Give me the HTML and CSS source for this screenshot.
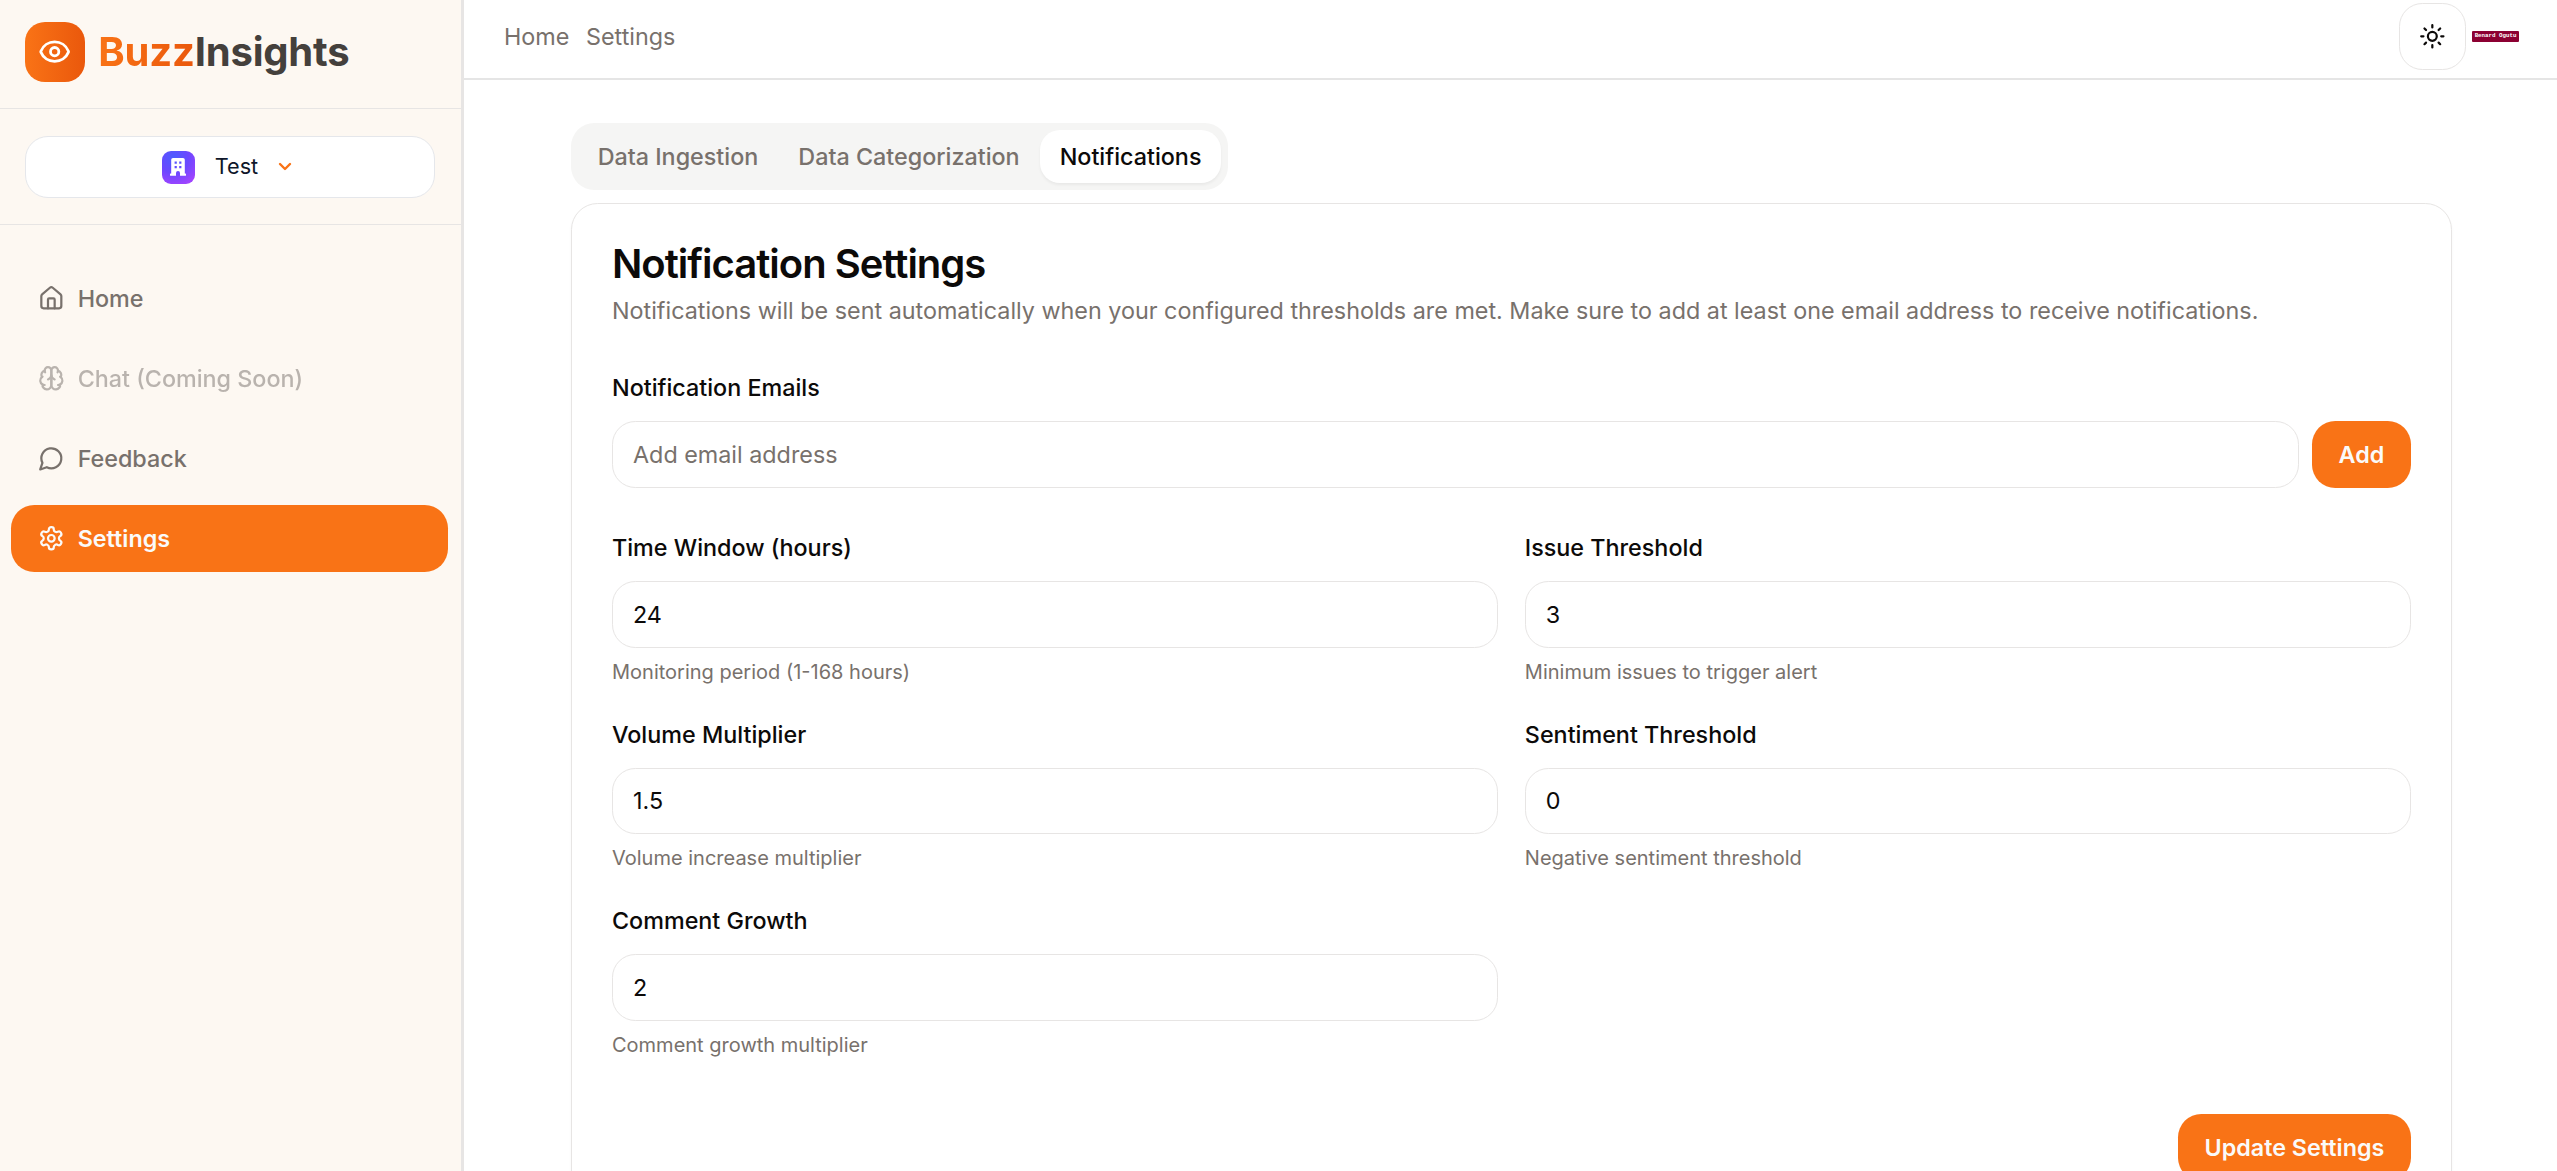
FILE: index.html
```html
<!DOCTYPE html>
<html lang="en">
<head>
<meta charset="utf-8">
<title>BuzzInsights – Settings</title>
<link rel="stylesheet" href="styles.css">
</head>
<body>
<div class="app">
  <aside class="sidebar">
    <div class="brand">
      <span class="brand-mark">
        <svg class="icon icon-eye" viewBox="0 0 24 24"><path d="M2.062 12.348a1 1 0 0 1 0-.696 10.75 10.75 0 0 1 19.876 0 1 1 0 0 1 0 .696 10.75 10.75 0 0 1-19.876 0"/><circle cx="12" cy="12" r="3"/></svg>
      </span>
      <span class="brand-name"><span class="brand-accent">Buzz</span>Insights</span>
    </div>
    <div class="org">
      <button class="org-switcher">
        <span class="org-avatar">
          <svg class="org-glyph" viewBox="0 0 16 18"><path fill-rule="evenodd" d="M3 0h10a1.8 1.8 0 0 1 1.8 1.8V15.6h.4a1 1 0 0 1 0 2.2H10V15a2 2 0 0 0-4 0v2.8H.8a1 1 0 0 1 0-2.2h.4V1.8A1.8 1.8 0 0 1 3 0zM4.6 3.6v2.2h2.2V3.6zM9.2 3.6v2.2h2.2V3.6zM4.6 8v2.2h2.2V8zM9.2 8v2.2h2.2V8z"/></svg>
        </span>
        <span class="org-name">Test</span>
        <svg class="org-chevron" viewBox="0 0 14 10"><path d="M2 2l5 5 5-5"/></svg>
      </button>
    </div>
    <nav class="nav">
      <a class="nav-item"><svg class="icon" viewBox="0 0 24 24"><path d="M15 21v-8a1 1 0 0 0-1-1h-4a1 1 0 0 0-1 1v8"/><path d="M3 10a2 2 0 0 1 .709-1.528l7-5.999a2 2 0 0 1 2.582 0l7 5.999A2 2 0 0 1 21 10v9a2 2 0 0 1-2 2H5a2 2 0 0 1-2-2z"/></svg>Home</a>
      <a class="nav-item nav-item-disabled"><svg class="icon" viewBox="0 0 24 24"><path d="M12 5a3 3 0 1 0-5.997.125 4 4 0 0 0-2.526 5.77 4 4 0 0 0 .556 6.588A4 4 0 1 0 12 18Z"/><path d="M12 5a3 3 0 1 1 5.997.125 4 4 0 0 1 2.526 5.77 4 4 0 0 1-.556 6.588A4 4 0 1 1 12 18Z"/><path d="M15 13a4.5 4.5 0 0 1-3-4 4.5 4.5 0 0 1-3 4"/><path d="M17.599 6.5a3 3 0 0 0 .399-1.375"/><path d="M6.003 5.125A3 3 0 0 0 6.401 6.5"/><path d="M3.477 10.896a4 4 0 0 1 .585-.396"/><path d="M19.938 10.5a4 4 0 0 1 .585.396"/><path d="M6 18a4 4 0 0 1-1.967-.516"/><path d="M19.967 17.484A4 4 0 0 1 18 18"/></svg>Chat (Coming Soon)</a>
      <a class="nav-item"><svg class="icon" viewBox="0 0 24 24"><path d="M7.9 20A9 9 0 1 0 4 16.1L2 22Z"/></svg>Feedback</a>
      <a class="nav-item nav-item-active"><svg class="icon" viewBox="0 0 24 24"><path d="M12.22 2h-.44a2 2 0 0 0-2 2v.18a2 2 0 0 1-1 1.73l-.43.25a2 2 0 0 1-2 0l-.15-.08a2 2 0 0 0-2.73.73l-.22.38a2 2 0 0 0 .73 2.73l.15.1a2 2 0 0 1 1 1.72v.51a2 2 0 0 1-1 1.74l-.15.09a2 2 0 0 0-.73 2.73l.22.38a2 2 0 0 0 2.73.73l.15-.08a2 2 0 0 1 2 0l.43.25a2 2 0 0 1 1 1.73V20a2 2 0 0 0 2 2h.44a2 2 0 0 0 2-2v-.18a2 2 0 0 1 1-1.73l.43-.25a2 2 0 0 1 2 0l.15.08a2 2 0 0 0 2.73-.73l.22-.39a2 2 0 0 0-.73-2.73l-.15-.08a2 2 0 0 1-1-1.74v-.5a2 2 0 0 1 1-1.74l.15-.09a2 2 0 0 0 .73-2.73l-.22-.38a2 2 0 0 0-2.73-.73l-.15.08a2 2 0 0 1-2 0l-.43-.25a2 2 0 0 1-1-1.73V4a2 2 0 0 0-2-2z"/><circle cx="12" cy="12" r="3"/></svg>Settings</a>
    </nav>
  </aside>
  <div class="main">
    <header class="topbar">
      <nav class="crumbs"><a>Home</a><a>Settings</a></nav>
      <div class="topbar-actions">
        <button class="theme-toggle"><svg class="icon icon-sun" viewBox="0 0 24 24"><circle cx="12" cy="12" r="4"/><path d="M12 2v2M12 20v2M4.93 4.93l1.41 1.41M17.66 17.66l1.41 1.41M2 12h2M20 12h2M6.34 17.66l-1.41 1.41M19.07 4.93l-1.41 1.41"/></svg></button>
        <span class="user-tag">Benard Ogutu</span>
      </div>
    </header>
    <main class="content">
      <div class="tabs">
        <button class="tab">Data Ingestion</button>
        <button class="tab">Data Categorization</button>
        <button class="tab tab-active">Notifications</button>
      </div>
      <section class="card">
        <h1 class="card-title">Notification Settings</h1>
        <p class="card-text">Notifications will be sent automatically when your configured thresholds are met. Make sure to add at least one email address to receive notifications.</p>
        <div class="field field-emails">
          <label class="label">Notification Emails</label>
          <div class="email-row">
            <input class="input" placeholder="Add email address">
            <button class="button">Add</button>
          </div>
        </div>
        <div class="grid">
          <div class="field"><label class="label">Time Window (hours)</label><input class="input" value="24"><p class="hint">Monitoring period (1-168 hours)</p></div>
          <div class="field"><label class="label">Issue Threshold</label><input class="input" value="3"><p class="hint">Minimum issues to trigger alert</p></div>
          <div class="field"><label class="label">Volume Multiplier</label><input class="input" value="1.5"><p class="hint">Volume increase multiplier</p></div>
          <div class="field"><label class="label">Sentiment Threshold</label><input class="input" value="0"><p class="hint">Negative sentiment threshold</p></div>
          <div class="field"><label class="label">Comment Growth</label><input class="input" value="2"><p class="hint">Comment growth multiplier</p></div>
        </div>
        <div class="card-footer"><button class="button">Update Settings</button></div>
      </section>
    </main>
  </div>
</div>
</body>
</html>
```
FILE: styles.css
```css
* { box-sizing: border-box; margin: 0; }
body {
  font-family: Inter, "Liberation Sans", sans-serif;
  font-size: 23.33px;
  line-height: 33.33px;
  color: #0c0a09;
  background: #fff;
  overflow: hidden;
}
button, input { font: inherit; color: inherit; border: 0; background: none; padding: 0; }
.app { display: flex; height: 1171px; }
.icon { width: 26.67px; height: 26.67px; fill: none; stroke: currentColor; stroke-width: 2; stroke-linecap: round; stroke-linejoin: round; flex: none; }

/* Sidebar */
.sidebar { width: 464px; flex: none; background: #fdf8f2; border-right: 3px solid #e7e5e4; }
.brand { display: flex; align-items: center; gap: 13.33px; height: 109px; padding: 0 25px 5px; border-bottom: 1px solid #e7e5e4; }
.brand-mark { display: grid; place-items: center; width: 60px; height: 60px; border-radius: 20px; background: linear-gradient(to right, #f97316, #ea580c); color: #fff; padding-right: 1px; }
.icon-eye { width: 33.33px; height: 33.33px; }
.brand-name { font-size: 40px; font-weight: 700; line-height: 53px; letter-spacing: -0.2px; color: #44403c; }
.brand-accent { background: linear-gradient(to right, #f97316, #ea580c); -webkit-background-clip: text; background-clip: text; color: transparent; }
.org { padding: 27px 26px 26px 25px; border-bottom: 1px solid #e7e5e4; }
.org-switcher { display: flex; align-items: center; justify-content: center; width: 410px; height: 62px; border: 1px solid #e5e7eb; border-radius: 23px; background: #fff; color: #0f172a; padding-right: 6px; font-size: 21.67px; }
.org-avatar { display: grid; place-items: center; width: 33px; height: 33px; border-radius: 9px; background: radial-gradient(circle at 35% 20%, #4b5cff 0%, #6c47ff 45%, #a044ff 85%); }
.org-glyph { width: 16px; height: 18px; fill: #fff; }
.org-name { margin-left: 20px; }
.org-chevron { width: 14px; height: 10px; margin-left: 20px; fill: none; stroke: #f97316; stroke-width: 2.4; stroke-linecap: round; stroke-linejoin: round; }
.nav { display: flex; flex-direction: column; gap: 13.33px; padding: 40px 13px 0 11px; }
.nav-item { display: flex; align-items: center; gap: 13.33px; height: 66.67px; padding: 0 26.67px; border-radius: 23.33px; font-weight: 500; color: #78716c; }
.nav-item-disabled { opacity: .5; }
.nav-item-active { background: #f97316; color: #fafaf9; font-weight: 600; }

/* Top bar */
.main { flex: 1; min-width: 0; }
.topbar { display: flex; justify-content: space-between; height: 80px; padding: 3px 38px 8px 40px; border-bottom: 2px solid #e5e5e5; }
.crumbs { display: flex; align-items: center; gap: 16.67px; height: 67px; color: #78716c; }
.topbar-actions { display: flex; align-items: center; gap: 6px; height: 67px; }
.theme-toggle { display: grid; place-items: center; width: 67px; height: 67px; border: 1px solid #e7e5e4; border-radius: 23.33px; }
.user-tag { width: 47px; height: 11px; border-radius: 1px; background: #8c0032; color: #fff; font: 700 5.8px/10px "Liberation Mono", monospace; text-align: center; white-space: nowrap; }

/* Content */
.content { width: 1881px; margin: 43px 0 0 107px; }
.tabs { display: inline-flex; align-items: center; height: 67px; padding: 0 6.67px; border-radius: 23.33px; background: #f5f5f4; vertical-align: top; }
.tab { height: 53.33px; padding: 0 20px; border-radius: 20px; font-weight: 500; color: #78716c; }
.tab-active { background: #fff; color: #0c0a09; box-shadow: 0 2px 3px rgba(0, 0, 0, .05); }
.card { margin-top: 13px; height: 1100px; padding: 40px; border: 1px solid #e7e5e4; border-radius: 26.67px; box-shadow: 0 2px 3px rgba(0, 0, 0, .04); }
.card-title { font-size: 40px; line-height: 40px; font-weight: 600; letter-spacing: -1px; }
.card-text { margin-top: 10px; color: #78716c; }
.field-emails { margin-top: 44px; }
.label { display: block; height: 50px; line-height: 34px; font-weight: 500; }
.email-row { display: flex; gap: 13.33px; }
.input { display: block; width: 100%; height: 66.67px; padding: 0 20px; border: 1px solid #e7e5e4; border-radius: 23.33px; background: #fff; }
.input::placeholder { color: #78716c; opacity: 1; }
.button { flex: none; height: 66.67px; padding: 0 26.67px; border-radius: 23.33px; background: #f97316; color: #fafaf9; font-weight: 600; }
.grid { display: grid; grid-template-columns: 1fr 1fr; column-gap: 26.67px; row-gap: 26.67px; margin-top: 43px; }
.field { min-width: 0; }
.grid .field { height: 160px; }
.hint { margin-top: 8px; font-size: 20px; line-height: 33.33px; color: #78716c; }
.card-footer { display: flex; justify-content: flex-end; margin-top: 50px; }
```
